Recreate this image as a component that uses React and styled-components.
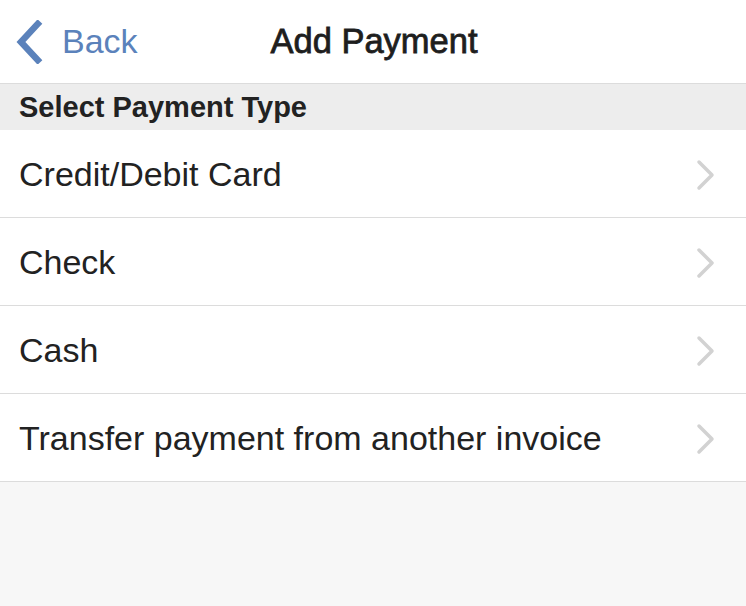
import React from "react";
import styled, { createGlobalStyle } from "styled-components";

const Global = createGlobalStyle`
  html, body { margin: 0; padding: 0; background: #f7f7f7; }
  body { font-family: "Liberation Sans", Arial, sans-serif; color: #222; }
`;

const Screen = styled.div`
  width: 746px;
  min-height: 606px;
  background: #f7f7f7;
  display: flex;
  flex-direction: column;
`;

const NavBar = styled.header`
  height: 83px;
  background: #fff;
  border-bottom: 1px solid #dcdcdc;
  display: grid;
  grid-template-columns: 1fr auto 1fr;
  align-items: center;
`;

const BackButton = styled.button`
  justify-self: start;
  display: flex;
  align-items: center;
  gap: 18px;
  padding: 0 0 0 16px;
  border: 0;
  background: none;
  color: #5b82bb;
  font: 34px "Liberation Sans", Arial, sans-serif;
  cursor: pointer;
`;

/* medium-weight title: regular face thickened slightly */
const Title = styled.h1`
  margin: 0 0 0 2px;
  font-size: 34.5px;
  font-weight: 400;
  color: #1e1e1e;
  -webkit-text-stroke: 0.8px #1e1e1e;
`;

const SectionHeader = styled.div`
  height: 46px;
  background: #ededed;
  display: flex;
  align-items: center;
  padding: 0 19px;
  font-size: 29px;
  font-weight: 700;
  color: #222;
`;

const List = styled.ul`
  list-style: none;
  margin: 0;
  padding: 0;
  background: #fff;
`;

const Row = styled.li`
  box-sizing: border-box;
  height: 88px;
  border-bottom: 1px solid #dcdcdc;
  display: flex;
  align-items: center;
  justify-content: space-between;
  padding: 2px 30px 0 19px;
  font-size: 34px;
  color: #222;
`;

const Chevron = ({ color, w, h, sw }) => (
  <svg width={w} height={h} viewBox="0 0 20 34" fill="none">
    <path d="M16 3 L3 17 L16 31" stroke={color} strokeWidth={sw} strokeLinecap="square" />
  </svg>
);

const RowChevron = () => (
  <svg width="20" height="32" viewBox="0 0 20 32" fill="none">
    <path d="M3 3 L16 16 L3 29" stroke="#d2d2d2" strokeWidth="3.5" strokeLinecap="round" strokeLinejoin="round" />
  </svg>
);

const items = [
  "Credit/Debit Card",
  "Check",
  "Cash",
  "Transfer payment from another invoice",
];

export default function App() {
  return (
    <Screen>
      <Global />
      <NavBar>
        <BackButton>
          <Chevron color="#5b82bb" w={28} h={44} sw={5} />
          Back
        </BackButton>
        <Title>Add Payment</Title>
        <span />
      </NavBar>
      <SectionHeader>Select Payment Type</SectionHeader>
      <List>
        {items.map((t) => (
          <Row key={t}>
            <span>{t}</span>
            <RowChevron />
          </Row>
        ))}
      </List>
    </Screen>
  );
}
